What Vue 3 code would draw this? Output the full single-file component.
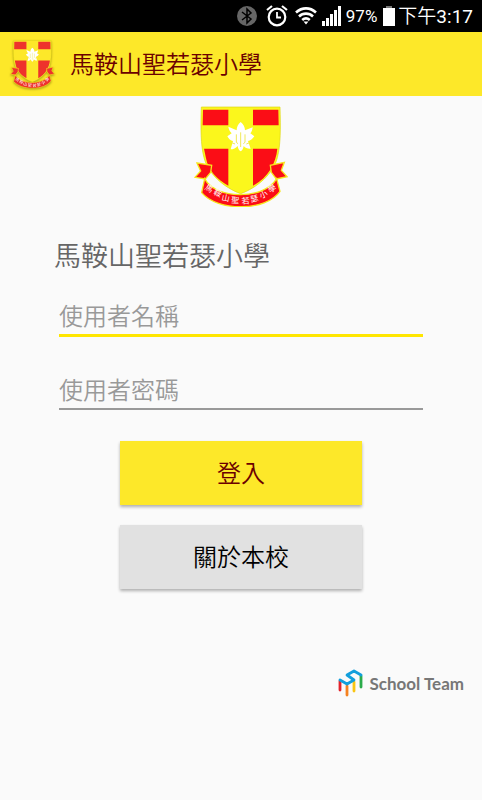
<template>
  <div class="screen">
    <svg class="defs" aria-hidden="true">
      <symbol id="crest" viewBox="28 20 282 306">
        <path class="crest-field" d="M50 26H286C288 90 288 140 278 178C266 226 218 268 168 286C118 268 70 226 58 178C48 140 48 90 50 26Z" />
        <path class="crest-red" d="M55 34H131V81H54ZM205 34H281L282 81H205ZM58 151H131V262C98 244 70 216 64 180ZM205 151H278C274 196 248 240 205 262Z" />
        <path class="crest-flower" d="M168 71C176 78 181 86 181 96L204 87C203 95 201 101 197 105L209 114C204 122 197 127 190 128L198 151C190 152 182 149 177 143C176 150 173 156 168 159C163 156 160 150 159 143C153 150 146 153 138 153L145 128C138 127 132 122 128 114L141 105C135 99 132 92 131 85L156 96C156 86 160 78 168 71Z" />
        <path class="crest-stem" d="M155 108V132L160 136M168 102V146M181 108V132L176 136M141 133L151 137M195 133L185 137" />
        <path class="crest-ribbon" d="M37 194L81 201L78 222L62 242L31 237L48 218ZM299 192L257 201L260 222L275 242L307 235L290 216Z" />
        <path class="crest-ribbon" d="M60 241C92 304 238 306 276 241L286 279C244 340 98 340 51 283Z" />
      </symbol>
    </svg>

    <div class="status-bar">
      <svg class="bluetooth" width="20" height="20" viewBox="0 0 20 20">
        <circle cx="10" cy="10" r="10" fill="#666" />
        <path d="M5 6L14 13L10 17V3L14 7L5 14" fill="none" stroke="#000" stroke-width="1.5" />
      </svg>
      <svg class="alarm" width="22" height="22" viewBox="0 0 22 22" fill="none" stroke="#fff">
        <circle cx="11" cy="12" r="8.3" stroke-width="2.2" />
        <path d="M1 5L6 1M21 5L16 1" stroke-width="2.2" />
        <path d="M11 7V12.5H15" stroke-width="1.8" />
      </svg>
      <svg class="wifi" width="22" height="20" viewBox="0 0 22 20" fill="none" stroke="#fff" stroke-width="2.6">
        <path d="M1 6.5C7 1 15 1 21 6.5M4 10.5C8 6.7 14 6.7 18 10.5M7.2 14C9.5 12 12.5 12 14.8 14" />
        <path d="M8.5 15.5H13.5L11 18.5Z" fill="#fff" stroke="none" />
      </svg>
      <svg class="signal" width="19" height="20" viewBox="0 0 19 20" fill="#fff">
        <path d="M0 15H3V20H0ZM4 12H7V20H4ZM8 8H11V20H8ZM12 4H15V20H12ZM16 0H19V20H16Z" />
      </svg>
      <span class="percent">97%</span>
      <svg class="battery" width="12" height="20" viewBox="0 0 12 20">
        <path d="M3 0H9V2H12V20H0V2H3Z" fill="#fff" />
        <path d="M3 0H9V2H3Z" fill="#777" />
      </svg>
      <span class="clock">下午<span class="time">3:17</span></span>
    </div>

    <header class="app-bar">
      <svg class="app-logo" viewBox="28 20 282 306">
        <use href="#crest" x="28" y="20" width="282" height="306" />
        <text class="crest-text" :x="motto.x" :y="motto.y" :rotate="motto.rotate">{{ school }}</text>
      </svg>
      <h1>{{ school }}</h1>
    </header>

    <main>
      <svg class="school-logo" viewBox="28 20 282 306">
        <use href="#crest" x="28" y="20" width="282" height="306" />
        <text class="crest-text" :x="motto.x" :y="motto.y" :rotate="motto.rotate">{{ school }}</text>
      </svg>
      <form @submit.prevent>
        <h2>{{ school }}</h2>
        <input v-model="username" class="field active" type="text" placeholder="使用者名稱" aria-label="使用者名稱" />
        <input v-model="password" class="field" type="password" placeholder="使用者密碼" aria-label="使用者密碼" />
        <button class="btn primary" type="submit">登入</button>
        <button class="btn" type="button">關於本校</button>
      </form>
    </main>

    <footer>
      <svg width="25" height="28" viewBox="0 0 25 28" fill="none" stroke-width="2.8" stroke-linecap="round" stroke-linejoin="round">
        <path d="M2 12V21" stroke="#e3242b" />
        <path d="M9 17V26" stroke="#f58220" />
        <path d="M16 13V22" stroke="#f9c513" />
        <path d="M23 7V18" stroke="#2bab4a" />
        <path d="M2 11L9 15L16 11L9 6L16 2L23 6" stroke="#129fdc" />
      </svg>
      <span>School Team</span>
    </footer>
  </div>
</template>

<script setup>
import { ref } from 'vue';

const school = '馬鞍山聖若瑟小學';

// one position and angle per character, following the ribbon
const motto = {
  x: '59 85 110 139 171 199 229 256',
  y: '271 287 305 313 317 312 301 284',
  rotate: '30 24 12 4 -4 -12 -24 -30'
};

const username = ref('');
const password = ref('');
</script>

<style>
body {
  margin: 0;
  background: #fafafa;
}
</style>

<style scoped>
.screen {
  --crest-yellow: #fbf71c;
  --crest-red: #fb0d16;
  min-height: 100vh;
  background: #fafafa;
  font-family: Roboto, "Noto Sans CJK TC", sans-serif;
}

.defs {
  position: absolute;
  width: 0;
  height: 0;
}

.crest-field {
  fill: var(--crest-yellow);
  stroke: #dcd612;
  stroke-width: 2;
}

.crest-red {
  fill: var(--crest-red);
}

.crest-flower {
  fill: #fff;
}

.crest-stem {
  fill: none;
  stroke: #f0e95a;
  stroke-width: 3;
}

.crest-ribbon {
  fill: var(--crest-red);
  stroke: #f6e51c;
  stroke-width: 4;
}

.crest-text {
  fill: #fff;
  font-size: 24px;
  font-family: "Noto Sans CJK TC", sans-serif;
}

.status-bar {
  display: flex;
  align-items: center;
  justify-content: flex-end;
  height: 32px;
  padding-right: 9px;
  background: #000;
  color: #fff;
}

.alarm {
  margin-left: 9px;
}

.wifi {
  margin-left: 7px;
}

.signal {
  margin-left: 5px;
}

.percent {
  margin-left: 5px;
  font-size: 17px;
}

.battery {
  margin: 0 3px 0 6px;
}

.clock {
  padding-top: 2px;
  font-size: 19px;
  font-weight: 350;
  line-height: 30px;
}

.time {
  font-weight: 400;
}

.app-bar {
  --crest-yellow: #fde829;
  --crest-red: #ee322c;
  display: flex;
  align-items: center;
  gap: 15px;
  height: 64px;
  padding-left: 10px;
  background: #fde829;
}

.app-logo {
  width: 45px;
  height: 50px;
  filter: drop-shadow(0 1px 1px rgba(90, 80, 0, 0.5));
}

h1 {
  margin: 2px 0 0;
  color: #6b0000;
  font-size: 24px;
  font-weight: 350;
  line-height: 36px;
}

main {
  display: flex;
  flex-direction: column;
  align-items: center;
}

.school-logo {
  width: 94px;
  height: 102px;
  margin-top: 9px;
}

form {
  display: flex;
  flex-direction: column;
  align-items: center;
  box-sizing: border-box;
  width: 100%;
  padding: 0 59px 0 54px;
}

h2 {
  align-self: flex-start;
  margin: 30px 0 0;
  color: #666;
  font-size: 27px;
  font-weight: 350;
  line-height: 40px;
}

.field {
  align-self: stretch;
  box-sizing: border-box;
  height: 40px;
  margin: 33px 0 0 5px;
  padding: 3px 0 0;
  border: 0;
  border-bottom: 2px solid #999;
  border-radius: 0;
  outline: none;
  background: transparent;
  color: #333;
  font-family: inherit;
  font-size: 24px;
  font-weight: 350;
}

.field.active {
  margin-top: 20px;
  border-bottom: 3px solid #ffe600;
}

.field::placeholder {
  color: #999;
  opacity: 1;
}

.btn {
  width: 242px;
  height: 64px;
  margin-top: 20px;
  margin-left: 5px;
  padding: 0 0 4px;
  border: 0;
  background: #e1e1e1;
  box-shadow: 0 2px 3px rgba(0, 0, 0, 0.3);
  color: #000;
  font-family: inherit;
  font-size: 24px;
  font-weight: 350;
}

.btn.primary {
  margin-top: 31px;
  background: #fde829;
  color: #6b0000;
}

footer {
  display: flex;
  align-items: center;
  justify-content: flex-end;
  gap: 6px;
  margin-top: 80px;
  padding-right: 18px;
  color: #777;
  font-family: Lato, sans-serif;
  font-size: 17px;
  font-weight: 700;
}
</style>
